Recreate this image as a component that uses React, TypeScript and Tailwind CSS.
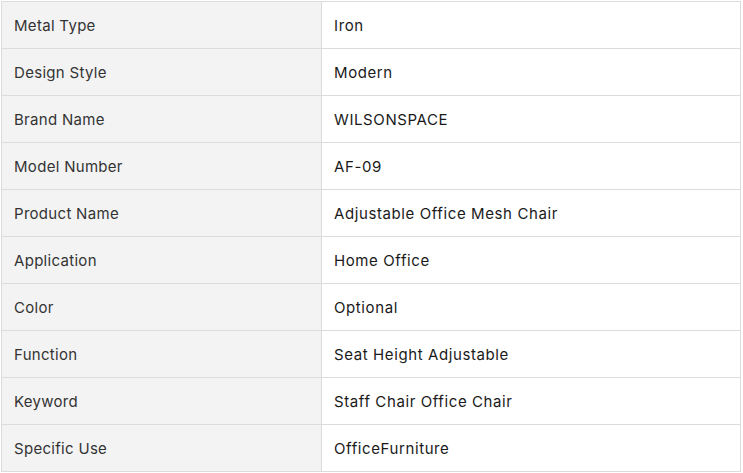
const rows: [string, string][] = [
  ['Metal Type', 'Iron'],
  ['Design Style', 'Modern'],
  ['Brand Name', 'WILSONSPACE'],
  ['Model Number', 'AF-09'],
  ['Product Name', 'Adjustable Office Mesh Chair'],
  ['Application', 'Home Office'],
  ['Color', 'Optional'],
  ['Function', 'Seat Height Adjustable'],
  ['Keyword', 'Staff Chair Office Chair'],
  ['Specific Use', 'OfficeFurniture'],
]

export default function App() {
  return (
    <div className="bg-white p-px" style={{ fontFamily: 'Inter, "Noto Sans", sans-serif' }}>
      <table className="w-[740px] border-collapse text-[15px]">
        <tbody>
          {rows.map(([label, value]) => (
            <tr key={label} className="h-[47px]">
              <td className="w-[320px] border border-[#dcdcdc] bg-[#f3f3f3] px-3 pt-0.5 tracking-[0.3px] text-[#333]">
                {label}
              </td>
              <td className="border border-[#dcdcdc] px-3 pt-0.5 tracking-[0.6px] text-[#1a1a1a]">{value}</td>
            </tr>
          ))}
        </tbody>
      </table>
    </div>
  )
}
